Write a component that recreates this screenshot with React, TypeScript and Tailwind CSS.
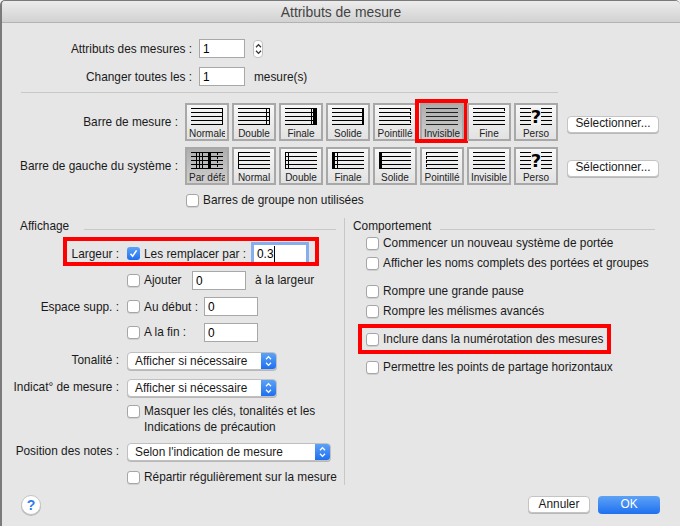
const BAR_TILES = [
  { label: 'Normale', kind: 'normale' },
  { label: 'Double', kind: 'double' },
  { label: 'Finale', kind: 'finale' },
  { label: 'Solide', kind: 'solide' },
  { label: 'Pointillé', kind: 'pointille' },
  { label: 'Invisible', kind: 'invisible', active: true, marked: true },
  { label: 'Fine', kind: 'fine' },
  { label: 'Perso', kind: 'perso' },
]

const LEFT_TILES = [
  { label: 'Par défaut', kind: 'defaut', active: true },
  { label: 'Normal', kind: 'l-normal' },
  { label: 'Double', kind: 'l-double' },
  { label: 'Finale', kind: 'l-finale' },
  { label: 'Solide', kind: 'l-solide' },
  { label: 'Pointillé', kind: 'l-pointille' },
  { label: 'Invisible', kind: 'invisible' },
  { label: 'Perso', kind: 'perso' },
]

function Staff({ kind, active }: { kind: string; active?: boolean }) {
  const bar = (x: number, w = 1) => <rect x={x} y={0} width={w} height={17} fill="#000" />
  return (
    <svg width="34" height="17" viewBox="0 0 34 17" overflow="visible" shapeRendering="crispEdges" aria-hidden="true">
      {[0, 4, 8, 12, 16].map((y) => (
        <rect key={y} x={1} y={y} width={32} height={1} fill={active && kind === 'invisible' ? '#222' : '#000'} />
      ))}
      {kind === 'normale' && bar(32)}
      {kind === 'double' && <>{bar(29)}{bar(32)}</>}
      {kind === 'finale' && <>{bar(27)}{bar(29, 4)}</>}
      {kind === 'solide' && bar(31, 2)}
      {kind === 'pointille' && (
        <path d="M32.5 1v2M32.5 5v2M32.5 9v2M32.5 13v2" stroke="#000" strokeWidth="1" />
      )}
      {kind === 'fine' && <rect x={32} y={0} width={1} height={3} fill="#000" />}
      {kind === 'l-normal' && bar(1)}
      {kind === 'l-double' && <>{bar(1)}{bar(4)}</>}
      {kind === 'l-finale' && <>{bar(1, 3)}{bar(6)}</>}
      {kind === 'l-solide' && bar(1, 3)}
      {kind === 'l-pointille' && (
        <path d="M1.5 1v2M1.5 5v2M1.5 9v2M1.5 13v2" stroke="#000" strokeWidth="1" />
      )}
      {kind === 'defaut' && (
        <>
          {bar(6)}{bar(9)}{bar(12)}{bar(18, 3)}
          <path d="M27.5 1v2M27.5 5v2M27.5 9v2M27.5 13v2" stroke="#000" strokeWidth="1" />
        </>
      )}
      {kind === 'perso' && (
        <>
          <rect x={12} y={0} width={10} height={17} fill="#f0f0f0" />
          <text
            x={17}
            y={15}
            textAnchor="middle"
            fontSize="18"
            fontWeight="700"
            fontFamily="'DejaVu Sans', sans-serif"
            fill="#000"
          >
            ?
          </text>
        </>
      )}
    </svg>
  )
}

function Tile({ label, kind, active, marked }: { label: string; kind: string; active?: boolean; marked?: boolean }) {
  return (
    <div
      className={`relative flex h-[38px] w-[44px] flex-col items-center border-2 border-[#a8a8a8] pt-[3px] ${
        active
          ? 'bg-gradient-to-b from-[#aeaeae] to-[#cfcfcf]'
          : 'bg-gradient-to-b from-[#f7f7f7] to-[#e2e2e2]'
      }`}
    >
      <Staff kind={kind} active={active} />
      <div className="mt-[3px] w-[36px] overflow-hidden text-center text-[10px] leading-[12px] whitespace-nowrap text-[#222]">
        {label}
      </div>
      {marked && <div className="absolute -top-[6px] -right-[6px] -bottom-[4px] -left-[7px] border-4 border-[#f00]" />}
    </div>
  )
}

function Check({ checked }: { checked?: boolean }) {
  if (checked) {
    return (
      <span className="flex h-[13px] w-[13px] shrink-0 items-center justify-center rounded-[3px] bg-gradient-to-b from-[#5da2f5] to-[#1d6ff0]">
        <svg width="11" height="11" viewBox="0 0 11 11" fill="none" aria-hidden="true">
          <path d="M2.5 5.8 4.6 8.2 8.6 2.4" stroke="#fff" strokeWidth="1.6" />
        </svg>
      </span>
    )
  }
  return (
    <span className="block h-[13px] w-[13px] shrink-0 rounded-[3px] border border-[#a6a6a6] bg-white shadow-[0_1px_0_#d0d0d0]" />
  )
}

function Field({ value, width = 'w-[54px]' }: { value: string; width?: string }) {
  return (
    <div className={`flex h-[19px] shrink-0 items-center border border-[#a8a8a8] bg-white pt-[2px] pl-[3px] text-black ${width}`}>
      {value}
    </div>
  )
}

function Chevrons({ color }: { color: string }) {
  return (
    <svg width="7" height="12" viewBox="0 0 7 12" fill="none" aria-hidden="true">
      <path d="M1 4.2 3.5 1.6 6 4.2M1 7.8 3.5 10.4 6 7.8" stroke={color} strokeWidth="1.3" />
    </svg>
  )
}

function Select({ value, width }: { value: string; width: string }) {
  return (
    <div className={`flex h-[18px] shrink-0 overflow-hidden rounded-[4px] border border-[#c0c0c0] bg-white shadow-[0_1px_0_#b8b8b8] ${width}`}>
      <div className="flex-1 pl-[7px] leading-[17px] text-[#1a1a1a]">{value}</div>
      <div className="flex w-[15px] items-center justify-center bg-gradient-to-b from-[#5da2f5] to-[#1d6ff0]">
        <Chevrons color="#fff" />
      </div>
    </div>
  )
}

function MacButton({ children, width }: { children: string; width: string }) {
  return (
    <div className={`flex h-[17px] shrink-0 items-center justify-center rounded-[4px] border border-[#c4c4c4] bg-white text-[#1a1a1a] shadow-[0_1px_0_#b8b8b8] ${width}`}>
      {children}
    </div>
  )
}

function Label({ children, width = 'w-[117px]' }: { children: string; width?: string }) {
  return <div className={`shrink-0 text-right whitespace-nowrap text-[#1a1a1a] ${width}`}>{children}</div>
}

function GroupTitle({ title, className }: { title: string; className: string }) {
  return (
    <div className={`flex h-[16px] items-start ${className}`}>
      <span className="leading-[16px] text-[#1a1a1a]">{title}</span>
      <div className="mt-[11px] h-px flex-1 bg-[#c8c8c8]" />
    </div>
  )
}

function CheckRow({ label, className = '' }: { label: string; className?: string }) {
  return (
    <div className={`flex h-[13px] items-center gap-[4px] whitespace-nowrap text-[#1a1a1a] ${className}`}>
      <Check />
      <span>{label}</span>
    </div>
  )
}

export default function App() {
  return (
    <div className="h-[526px] w-[680px] overflow-hidden bg-[#f4f4f4] font-['Liberation_Sans',sans-serif] text-[11.85px]">
      <div className="flex h-full flex-col overflow-hidden rounded-t-[5px] border-t border-l-2 border-[#7a7a7a] bg-[#e6e6e6]">
        {/* Title bar */}
        <div className="flex h-[22px] shrink-0 items-center justify-center border-b border-[#b2b2b2] bg-gradient-to-b from-[#ececec] to-[#d2d2d2] pt-[1px] text-[13.9px] text-[#444]">
          Attributs de mesure
        </div>

        {/* Measure fields */}
        <div className="mt-[16px] flex h-[19px] items-center">
          <Label width="w-[190px] pt-[2px]">Attributs des mesures :</Label>
          <Field value="1" width="ml-[7px] w-[46px]" />
          <div className="ml-[8px] flex h-[18px] w-[10px] items-center justify-center rounded-[4px] border border-[#c0c0c0] bg-white">
            <Chevrons color="#333" />
          </div>
        </div>
        <div className="mt-[9px] flex h-[19px] items-center">
          <Label width="w-[190px] pt-[2px]">Changer toutes les :</Label>
          <Field value="1" width="ml-[7px] w-[46px]" />
          <span className="ml-[9px] pt-[2px] text-[#1a1a1a]">mesure(s)</span>
        </div>
        <div className="mt-[6px] ml-[19px] h-px w-[537px] bg-[#c8c8c8]" />

        {/* Barlines */}
        <div className="mt-[10px] flex h-[38px] items-center">
          <div className="pt-[2px]"><Label width="w-[176px]">Barre de mesure :</Label></div>
          <div className="ml-[7px] flex gap-[3px]">
            {BAR_TILES.map((t) => (
              <Tile key={t.label} {...t} />
            ))}
          </div>
          <div className="pt-[4px]"><MacButton width="ml-[9px] w-[92px]">Sélectionner...</MacButton></div>
        </div>
        <div className="mt-[6px] flex h-[38px] items-center">
          <div className="pt-[2px]"><Label width="w-[176px]">Barre de gauche du système :</Label></div>
          <div className="ml-[7px] flex gap-[3px]">
            {LEFT_TILES.map((t) => (
              <Tile key={t.label} {...t} />
            ))}
          </div>
          <div className="pt-[4px]"><MacButton width="ml-[9px] w-[92px]">Sélectionner...</MacButton></div>
        </div>
        <CheckRow label="Barres de groupe non utilisées" className="mt-[9px] ml-[184px]" />

        {/* Groups */}
        <div className="mt-[11px] flex h-[268px]">
          <div className="flex w-[342px] shrink-0 flex-col">
            <GroupTitle title="Affichage" className="mr-[8px] ml-[18px] gap-[15px]" />

            <div className="relative mt-[10px] flex h-[19px] items-center">
              <Label width="w-[117px] pt-[2px]">Largeur :</Label>
              <div className="ml-[8px]"><Check checked /></div>
              <span className="ml-[4px] pt-[2px] whitespace-nowrap text-[#1a1a1a]">Les remplacer par :</span>
              <div className="ml-[8px] flex h-[18px] w-[52px] items-center bg-white pt-[2px] pl-[3px] text-black ring-[3px] ring-[#86aeee]">
                <span className="border-r border-black">0.3</span>
              </div>
              <div className="absolute -top-[7px] -bottom-[3px] left-[61px] w-[256px] border-4 border-[#f00]" />
            </div>

            <div className="mt-[8px] flex h-[19px] items-center">
              <div className="ml-[125px] flex w-[65px] items-center gap-[4px] text-[#1a1a1a]">
                <Check />
                <span>Ajouter</span>
              </div>
              <Field value="0" />
              <span className="ml-[9px] whitespace-nowrap text-[#1a1a1a]">à la largeur</span>
            </div>

            <div className="mt-[7px] flex h-[19px] items-center">
              <Label width="w-[117px] pt-[2px]">Espace supp. :</Label>
              <div className="ml-[8px] flex w-[77px] items-center gap-[4px] text-[#1a1a1a]">
                <Check />
                <span className="pt-[2px]">Au début :</span>
              </div>
              <Field value="0" />
            </div>

            <div className="mt-[7px] flex h-[19px] items-center">
              <div className="ml-[125px] flex w-[77px] items-center gap-[4px] text-[#1a1a1a]">
                <Check />
                <span>A la fin :</span>
              </div>
              <Field value="0" />
            </div>

            <div className="mt-[10px] flex h-[18px] items-center">
              <Label>Tonalité :</Label>
              <div className="ml-[8px]"><Select value="Afficher si nécessaire" width="w-[150px]" /></div>
            </div>
            <div className="mt-[9px] flex h-[18px] items-center">
              <Label>Indicat° de mesure :</Label>
              <div className="ml-[8px]"><Select value="Afficher si nécessaire" width="w-[150px]" /></div>
            </div>

            <div className="mt-[6px] ml-[125px] flex items-start gap-[4px] leading-[16px] text-[#1a1a1a]">
              <div className="mt-[2px]"><Check /></div>
              <div>
                Masquer les clés, tonalités et les
                <br />
                Indications de précaution
              </div>
            </div>

            <div className="mt-[8px] flex h-[18px] items-center">
              <Label>Position des notes :</Label>
              <div className="ml-[8px]"><Select value="Selon l'indication de mesure" width="w-[204px]" /></div>
            </div>

            <CheckRow label="Répartir régulièrement sur la mesure" className="mt-[10px] ml-[125px]" />
          </div>

          <div className="h-[267px] w-px shrink-0 bg-[#c8c8c8]" />

          <div className="flex flex-1 flex-col">
            <GroupTitle title="Comportement" className="mr-[25px] ml-[8px] gap-[9px]" />
            <CheckRow label="Commencer un nouveau système de portée" className="mt-[3px] ml-[21px]" />
            <CheckRow label="Afficher les noms complets des portées et groupes" className="mt-[7px] ml-[21px]" />
            <CheckRow label="Rompre une grande pause" className="mt-[15px] ml-[21px]" />
            <CheckRow label="Rompre les mélismes avancés" className="mt-[7px] ml-[21px]" />
            <div className="relative mt-[15px]">
              <CheckRow label="Inclure dans la numérotation des mesures" className="ml-[21px]" />
              <div className="absolute -top-[9px] -bottom-[8px] left-[13px] w-[253px] border-4 border-[#f00]" />
            </div>
            <CheckRow label="Permettre les points de partage horizontaux" className="mt-[15px] ml-[21px]" />
          </div>
        </div>

        {/* Footer */}
        <div className="mt-[9px] flex items-start">
          <div className="ml-[19px] flex h-[20px] w-[20px] items-center justify-center rounded-full border border-[#c4c4c4] bg-white text-[14px] font-bold text-[#2f7bf0] shadow-[0_1px_0_#b8b8b8]">
            ?
          </div>
          <div className="mt-[1px] ml-[487px] flex gap-[8px]">
            <MacButton width="w-[62px]">Annuler</MacButton>
            <div className="flex h-[18px] w-[62px] items-center justify-center rounded-[4px] bg-gradient-to-b from-[#5da2f5] to-[#1d6ff0] text-white">
              OK
            </div>
          </div>
        </div>
      </div>
    </div>
  )
}
